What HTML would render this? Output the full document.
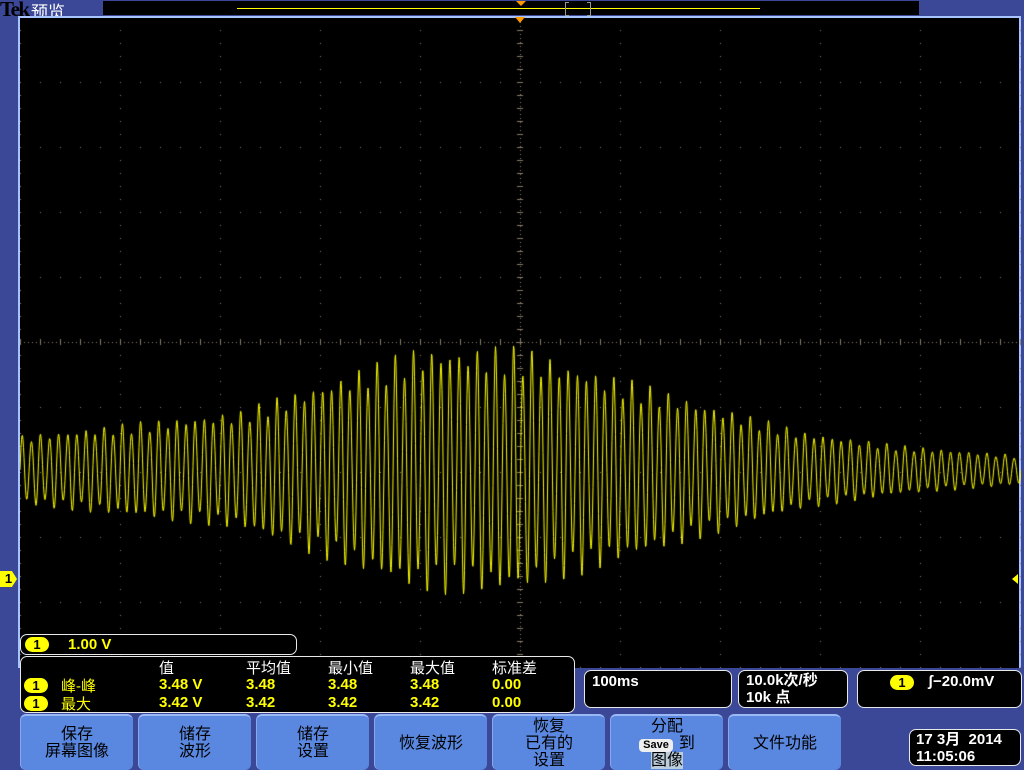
<!DOCTYPE html>
<html><head><meta charset="utf-8"><style>
body{margin:0;width:1024px;height:768px;background:#3b4897;position:relative;overflow:hidden;font-family:"Liberation Sans","Noto Sans CJK SC",sans-serif;}
.abs{position:absolute}
#scr{left:18px;top:16px;width:1003px;height:652px;background:#000;border-left:2px solid #a8c4ff;border-top:2px solid #a8c4ff;border-right:2px solid #a8c4ff;box-sizing:border-box}
.box{position:absolute;background:#000;border:1.5px solid #e8e8e8;border-radius:7px;box-sizing:border-box;color:#fff}
.btn{position:absolute;top:714px;width:113px;height:56px;background:#5a88e0;border-radius:6px;border-top:2px solid #9ab8f4;border-left:1px solid #8aa8ea;box-sizing:border-box;font-size:16px;color:#000;text-align:center;line-height:17px;display:flex;align-items:center;justify-content:center;flex-direction:column}
.c1{display:inline-block;background:#ff0;color:#000;border-radius:9px;width:24px;height:15px;line-height:15px;text-align:center;font-weight:bold;font-size:13px}
.y{color:#ff0;font-weight:bold}
.m{position:absolute;font-size:15px}
</style></head><body>
<div class="abs" style="left:0;top:-3px;font-family:'Liberation Serif',serif;font-weight:bold;font-size:21px;color:#000;letter-spacing:-1.5px">Tek</div>
<div class="abs" style="left:31px;top:-2px;font-size:17px;color:#fff">预览</div>
<div class="abs" style="left:103px;top:1px;width:816px;height:14px;background:#000"></div>
<div class="abs" style="left:237px;top:8px;width:523px;height:1px;background:#ff0"></div>
<div class="abs" style="left:516px;top:1px;width:0;height:0;border-left:5px solid transparent;border-right:5px solid transparent;border-top:5px solid #f90"></div>
<div class="abs" style="left:565px;top:2px;width:3px;height:12px;border:1px solid #999;border-right:none"></div>
<div class="abs" style="left:587px;top:2px;width:3px;height:12px;border:1px solid #999;border-left:none"></div>
<div id="scr" class="abs"></div>
<canvas id="cv" class="abs" width="1001" height="650" style="left:20px;top:18px"></canvas>
<div class="abs" style="left:515px;top:17px;width:0;height:0;border-left:5px solid transparent;border-right:5px solid transparent;border-top:6px solid #f90"></div>
<div class="abs" style="left:0;top:571px;width:17px;height:16px;background:#ff0;color:#000;font-weight:bold;font-size:13px;line-height:16px;text-align:center;clip-path:polygon(0 0,70% 0,100% 50%,70% 100%,0 100%)">1</div>
<div class="abs" style="left:1012px;top:574px;width:0;height:0;border-top:5px solid transparent;border-bottom:5px solid transparent;border-right:6px solid #ff0"></div>
<div class="box" style="left:20px;top:634px;width:277px;height:21px"><span class="c1" style="position:absolute;left:4px;top:2px">1</span><span class="y" style="position:absolute;left:47px;top:1px;font-size:15px">1.00 V</span></div>
<div class="box" style="left:20px;top:656px;width:555px;height:57px">
<span class="m" style="left:138px;top:0">值</span><span class="m" style="left:225px;top:0">平均值</span><span class="m" style="left:307px;top:0">最小值</span><span class="m" style="left:389px;top:0">最大值</span><span class="m" style="left:471px;top:0">标准差</span>
<span class="c1" style="position:absolute;left:3px;top:21px">1</span><span class="m y" style="left:40px;top:18px;font-weight:normal">峰-峰</span>
<span class="m y" style="left:138px;top:19px">3.48 V</span><span class="m y" style="left:225px;top:19px">3.48</span><span class="m y" style="left:307px;top:19px">3.48</span><span class="m y" style="left:389px;top:19px">3.48</span><span class="m y" style="left:471px;top:19px">0.00</span>
<span class="c1" style="position:absolute;left:3px;top:39px">1</span><span class="m y" style="left:40px;top:36px;font-weight:normal">最大</span>
<span class="m y" style="left:138px;top:37px">3.42 V</span><span class="m y" style="left:225px;top:37px">3.42</span><span class="m y" style="left:307px;top:37px">3.42</span><span class="m y" style="left:389px;top:37px">3.42</span><span class="m y" style="left:471px;top:37px">0.00</span>
</div>
<div class="box" style="left:584px;top:670px;width:148px;height:38px"><b style="position:absolute;left:7px;top:2px;font-size:15px">100ms</b></div>
<div class="box" style="left:738px;top:670px;width:110px;height:38px"><div style="position:absolute;left:7px;top:1px;font-size:15px;line-height:17px;font-weight:bold">10.0k次/秒<br>10k 点</div></div>
<div class="box" style="left:857px;top:670px;width:165px;height:38px"><span class="c1" style="position:absolute;left:32px;top:4px">1</span><b style="position:absolute;left:70px;top:2px;font-size:15px">ʃ−20.0mV</b></div>
<div class="btn" style="left:20px"><div>保存</div><div>屏幕图像</div></div>
<div class="btn" style="left:138px"><div>储存</div><div>波形</div></div>
<div class="btn" style="left:256px"><div>储存</div><div>设置</div></div>
<div class="btn" style="left:374px"><div>恢复波形</div></div>
<div class="btn" style="left:492px"><div>恢复</div><div>已有的</div><div>设置</div></div>
<div class="btn" style="left:610px"><div>分配</div><div><span style="display:inline-block;background:#eee;border-radius:4px;font-size:11px;font-weight:bold;padding:0 4px;line-height:13px;margin-right:6px">Save</span>到</div><div><span style="background:#bcd">图像</span></div></div>
<div class="btn" style="left:728px"><div>文件功能</div></div>
<div class="box" style="left:909px;top:729px;width:112px;height:37px"><div style="position:absolute;left:6px;top:1px;font-size:15px;line-height:17px;font-weight:bold">17 3月&nbsp; 2014<br>11:05:06</div></div>
<script>
var c=document.getElementById('cv').getContext('2d');
c.fillStyle='#8a7f6a';
function dot(x,y){c.fillRect(Math.round(x-20),Math.round(y-18),1,1);}
for(var i=0;i<=10;i++){var gx=20+i*100;for(var y=30;y<668;y+=13)dot(gx,y);}
for(var j=0;j<=10;j++){var gy=17+j*65;for(var x=20;x<1021;x+=20)dot(x,gy);}
for(var x=20;x<1021;x+=4)dot(x,342);
for(var y=18;y<668;y+=4)dot(520,y);
for(var y=30;y<668;y+=13){c.fillRect(497,y-18,6,1);}
for(var x=20;x<1021;x+=20){c.fillRect(x-20,339-18,1,6);}
var pts=[[20,35],[240,60],[330,92],[420,125],[520,125],[600,100],[700,70],[800,40],[900,25],[1021,15]];
function A(x){for(var k=0;k<pts.length-1;k++){if(x<=pts[k+1][0]){var t=(x-pts[k][0])/(pts[k+1][0]-pts[k][0]);return pts[k][1]+t*(pts[k+1][1]-pts[k][1]);}}return 15;}
c.strokeStyle='#ffff00';c.lineWidth=1;c.beginPath();
for(var x=20;x<=1021;x+=0.5){var a=A(x)*(0.88+0.12*Math.sin(x*0.37));var y=470-a*Math.sin((x-20)*2*Math.PI/9.1);var px=x-20,py=y-18;if(x==20)c.moveTo(px,py);else c.lineTo(px,py);}
c.stroke();
</script>
</body></html>
